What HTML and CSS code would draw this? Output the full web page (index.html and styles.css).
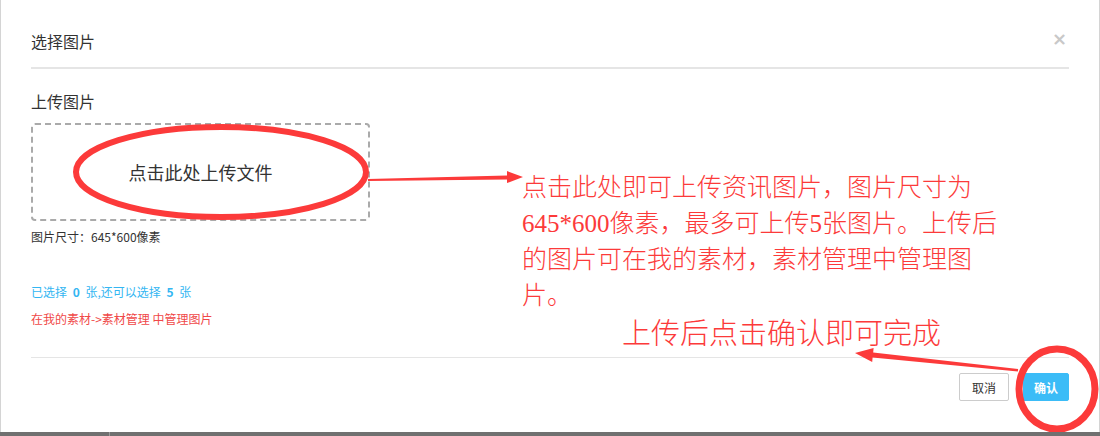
FILE: index.html
```html
<!DOCTYPE html>
<html lang="zh-CN">
<head>
  <meta charset="UTF-8">
  <title>选择图片</title>
  <link rel="stylesheet" href="styles.css">
</head>
<body>
  <div class="modal">
    <div class="modal-header">
      <span class="modal-title">选择图片</span>
      <span class="close-btn">×</span>
    </div>
    <div class="modal-body">
      <div class="field-label">上传图片</div>
      <div class="upload-box">点击此处上传文件</div>
      <div class="size-tip">图片尺寸：645*600像素</div>
      <div class="count-tip">已选择 <b>0</b> 张,还可以选择 <b>5</b> 张</div>
      <div class="manage-tip">在我的素材-&gt;素材管理 中管理图片</div>
    </div>
    <div class="modal-footer">
      <button class="btn btn-cancel">取消</button>
      <button class="btn btn-ok">确认</button>
    </div>

    <!-- 标注 -->
    <svg class="marks" width="1100" height="436" viewBox="0 0 1100 436">
      <ellipse cx="221" cy="172" rx="145" ry="45" fill="none" stroke="#fc3a3a" stroke-width="6"/>
      <polygon points="368,179 507,175.5 507,171 523,177 507,183 507,179.5 368,181" fill="#fc3a3a"/>
      <polygon points="855,353 873.6,347.9 873.2,352.4 1018.1,369 1017.9,371.5 872.6,357.4 872.2,361.9" fill="#fc3a3a"/>
      <ellipse cx="1057" cy="389" rx="38" ry="40" fill="none" stroke="#fc3a3a" stroke-width="7"/>
    </svg>
    <div class="note note-main">点击此处即可上传资讯图片，图片尺寸为<br>645*600像素，最多可上传5张图片。上传后<br>的图片可在我的素材，素材管理中管理图<br>片。</div>
    <div class="note note-ok">上传后点击确认即可完成</div>
  </div>
  <div class="taskbar"><span class="task-sep"></span></div>
</body>
</html>
```

FILE: styles.css
```css
html, body {
  margin: 0; padding: 0;
  width: 1100px; height: 436px;
  overflow: hidden;
  background: #fff;
  font-family: "Noto Sans CJK SC", "Noto Sans", sans-serif;
  color: #333;
}
.modal {
  position: relative;
  height: 432px;
  box-sizing: border-box;
  border-left: 1px solid #d4d4d4;
  border-right: 1px solid #d4d4d4;
  background: #fff;
}
.modal-header {
  height: 69px; box-sizing: border-box;
  margin: 0 30px; padding: 14px 2px 0 0;
  display: flex; align-items: center; justify-content: space-between;
  border-bottom: 2px solid #e5e5e5;
}
.modal-title { font-size: 16px; line-height: 22px; color: #333; }
.close-btn { font-size: 18px; line-height: 18px; color: #c8c8c8; font-weight: 700; font-family: "DejaVu Sans", sans-serif; margin-top: -4px; }
.modal-body { margin: 0 30px; padding-top: 21px; }
.field-label { font-size: 16px; line-height: 22px; color: #333; }
.upload-box {
  margin-top: 11px;
  width: 339px; height: 98px; box-sizing: border-box;
  border: 2px dashed #aaa; border-radius: 4px;
  display: flex; align-items: center; justify-content: center;
  font-size: 18px; color: #333;
}
.size-tip { margin-top: 7px; font-size: 12px; line-height: 18px; color: #333; }
.count-tip { margin-top: 37px; font-size: 12px; line-height: 18px; color: #33b6f2; }
.count-tip b { font-weight: 700; margin: 0 3px; }
.manage-tip { margin-top: 9px; font-size: 12px; line-height: 18px; color: #f04848; }
.modal-footer {
  margin: 29px 30px 0 30px; padding-top: 15px;
  border-top: 1px solid #e5e5e5;
  display: flex; justify-content: flex-end; gap: 14px;
}
.btn {
  height: 28px; box-sizing: border-box;
  font-family: "Noto Sans CJK SC", sans-serif; font-size: 12px;
  border-radius: 2px; cursor: pointer;
}
.btn-cancel { background: #fff; border: 1px solid #ccc; color: #333; padding: 0 12px; }
.btn-ok { background: #3bbcf7; border: 1px solid #3bbcf7; color: #fff; font-weight: 700; padding: 0 10px; }
.marks { position: absolute; left: -1px; top: 0; pointer-events: none; }
.note {
  position: absolute;
  color: #fc3a3a;
  font-family: "Liberation Serif", "Noto Sans CJK SC", serif;
  font-weight: 300;
  white-space: nowrap;
}
.note-main { left: 521px; top: 170px; font-size: 25px; line-height: 36px; }
.note-ok { left: 621px; top: 319px; font-size: 29px; line-height: 30px; }
.taskbar { height: 4px; background: #707070; position: relative; }
.task-sep { position: absolute; left: 109px; top: 0; width: 1px; height: 4px; background: #9a9a9a; }
```
